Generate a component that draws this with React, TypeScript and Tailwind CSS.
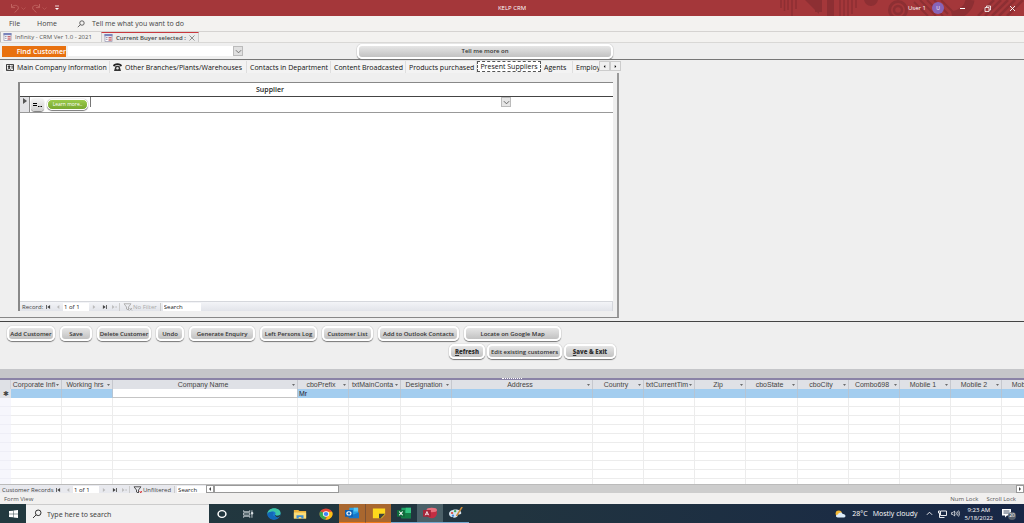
import { useState } from "react";
import type { ReactNode } from "react";

const UI = "font-['Open_Sans','Noto_Sans',sans-serif]";

function Chevron({ className = "" }: { className?: string }) {
  return (
    <svg viewBox="0 0 8 8" className={"size-[7px] " + className} fill="none" stroke="currentColor" aria-hidden="true">
      <path d="M1 2.500 4 5.500 7 2.500" />
    </svg>
  );
}

function UndoIcon({ flip = false }: { flip?: boolean }) {
  return (
    <svg viewBox="0 0 10 10" className={"size-2.5 " + (flip ? "-scale-x-100" : "")} fill="none" stroke="currentColor" strokeWidth="1" aria-hidden="true">
      <path d="M1.500 1v3.600h3.600M1.500 4.400C3.400 1.600 8.200 1.600 8.400 4.800 8.400 6.600 6.600 7.600 4.600 9.400" />
    </svg>
  );
}

function TitlePattern() {
  return (
    <svg viewBox="0 0 244 16" className="absolute inset-y-0 right-0 h-4 w-[244px]" fill="none" stroke="#8d2f33" aria-hidden="true">
      <path d="M1 0v8M4.500 0v11M8 0v10M12 0v16M16 0v9" strokeWidth="1.500" />
      <path d="M25 0l14 14V0z" fill="#8d2f33" stroke="none" />
      <path d="M35 0h7v12H35zM47 0h7v16H47z" fill="#8d2f33" stroke="none" />
      <path d="M60 0v16M64 0v16M68 0v16M72 0v14M76 0v8" strokeWidth="1.500" />
      <circle cx="91" cy="-1" r="7" fill="#8d2f33" stroke="none" />
      <circle cx="118" cy="10" r="8.500" strokeWidth="3" />
      <circle cx="118" cy="10" r="4" strokeWidth="2.500" />
      <path d="M134 2l14 14M140 0l16 16M147 0l16 16M154 0l14 14M161 0l12 12" strokeWidth="2" />
      <path d="M190 0c-1 8-8 14-18 16" strokeWidth="9" />
      <path d="M198 16l16-16M205 16l16-16M212 16l16-16M219 16l16-16M227 16l16-16" strokeWidth="2.500" />
    </svg>
  );
}

function TitleBar() {
  return (
    <header className="relative grid h-4 shrink-0 grid-cols-3 items-center overflow-hidden bg-[#a4373a] text-[6px] text-white">
      <TitlePattern />
      <div className="flex items-center gap-0.5 pl-2.5 text-[#c0625f]">
        <button aria-label="Undo" className="flex items-center"><UndoIcon /><Chevron className="scale-75" /></button>
        <button aria-label="Redo" className="ml-0.5 flex items-center"><UndoIcon flip /><Chevron className="scale-75" /></button>
        <button aria-label="Customize toolbar" className="ml-1 text-white">
          <svg viewBox="0 0 6 6" className="size-1.5" stroke="currentColor" fill="currentColor" strokeWidth=".8"><path d="M1 1h4" /><path d="M1 3h4L3 5z" stroke="none" /></svg>
        </button>
      </div>
      <h1 className="text-center">KELP CRM</h1>
      <div className="relative flex items-center justify-end">
        <span className="mr-1.5">User 1</span>
        <span className="mr-[15px] flex size-3 items-center justify-center rounded-full bg-[#8764b8] text-[5px]">U</span>
        <button aria-label="Minimize" className="mr-[18px]"><svg viewBox="0 0 7 7" className="size-[7px]" stroke="currentColor"><path d="M1 3.500h5" /></svg></button>
        <button aria-label="Restore" className="mr-[18px]"><svg viewBox="0 0 7 7" className="size-[7px]" fill="none" stroke="currentColor" strokeWidth=".8"><path d="M1 2.500h4v4H1zM2.500 2.500V1h4v4H5" /></svg></button>
        <button aria-label="Close" className="mr-2"><svg viewBox="0 0 7 7" className="size-[7px]" stroke="currentColor" strokeWidth=".9"><path d="M1 1l5 5M6 1L1 6" /></svg></button>
      </div>
    </header>
  );
}

function SearchGlyph({ className }: { className: string }) {
  return (
    <svg viewBox="0 0 10 10" className={className} fill="none" stroke="currentColor" aria-hidden="true">
      <circle cx="6.200" cy="3.800" r="2.800" /><path d="M4.200 5.800 1 9" />
    </svg>
  );
}

function FormIcon() {
  return (
    <svg viewBox="0 0 9 9" className="h-2 w-[9px] shrink-0" aria-hidden="true">
      <path d="M.5.5h8v8h-8z" fill="#fff" stroke="#a5a5bb" /><path d="M0 0h9v2.500H0z" fill="#7a84bb" />
      <path d="M1.500 4h2M1.500 6h2" stroke="#8c8ca8" /><path d="M4.500 3.500h3.500v1.500H4.500zM4.500 6h3.500v1.500H4.500z" fill="#c9696f" />
    </svg>
  );
}

function GlossButton({ children, className }: { children: ReactNode; className: string }) {
  return (
    <button className={"flex h-[15px] shrink-0 items-center justify-center rounded-[5px] border-2 border-white bg-linear-to-b from-[#e6e6e6] to-[#c2c2c2] text-[6px] font-semibold whitespace-nowrap text-[#333] shadow-[0_1px_1px_#777,0_0_1px_#999] " + className}>
      {children}
    </button>
  );
}

const pages = [
  { name: "Main Company Information", width: "w-[107px]", icon: "contact" },
  { name: "Other Branches/Plants/Warehouses", width: "w-[137px]", icon: "phone" },
  { name: "Contacts in Department", width: "w-[84px]" },
  { name: "Content Broadcasted", width: "w-[75px]" },
  { name: "Products purchased", width: "w-[71px]" },
  { name: "Present Suppliers", width: "w-16" },
  { name: "Agents", width: "w-8" },
  { name: "Employees", width: "w-10" },
];

function PageIcon({ kind }: { kind: string }) {
  return kind === "contact" ? (
    <svg viewBox="0 0 9 8" className="h-[7px] w-2 shrink-0" fill="none" stroke="#222" aria-hidden="true">
      <path d="M.5.5h8v7h-8z" /><circle cx="3.500" cy="3" r="1" fill="#222" /><path d="M2 6.500c0-2 3-2 3 0M6 2.500h2M6 4.500h2" />
    </svg>
  ) : (
    <svg viewBox="0 0 9 8" className="h-2 w-[9px] shrink-0" aria-hidden="true">
      <path d="M0 3C0-.6 9-.6 9 3L7 3.600 6.500 2.300h-4L2 3.600z" fill="#222" /><path d="M2.500 3h4l1.500 5H1z" fill="#333" /><circle cx="4.500" cy="5.300" r="1.200" fill="#ddd" />
    </svg>
  );
}

function PageTabs() {
  const [active, setActive] = useState("Present Suppliers");
  return (
    <div className="flex w-[621px] items-start pt-px pl-[3px]">
      <div role="tablist" className="flex min-w-0 flex-1 overflow-hidden">
        {pages.map((p) => (
          <button
            key={p.name}
            role="tab"
            aria-selected={p.name === active}
            onClick={() => setActive(p.name)}
            className={
              "flex shrink-0 items-center gap-[3px] text-[7px] font-medium whitespace-nowrap text-[#111] " + p.width +
              (p.name === active
                ? " h-[11px] justify-center border border-dashed border-[#555] bg-white"
                : " h-3 border-r border-[#dedede] bg-[#f3f3f3] pl-[3px]")
            }
          >
            {p.icon && <PageIcon kind={p.icon} />}
            {p.name}
          </button>
        ))}
      </div>
      <button aria-label="Scroll tabs left" className="flex h-2.5 w-[11px] items-center justify-center border border-[#ccc] bg-[#f0f0f0]"><svg viewBox="0 0 4 4" className="size-[3px]"><path d="M3 0v4L1 2z" /></svg></button>
      <button aria-label="Scroll tabs right" className="flex h-2.5 w-[11px] items-center justify-center border border-[#ccc] bg-[#f0f0f0]"><svg viewBox="0 0 4 4" className="size-[3px]"><path d="M1 0v4l2-2z" /></svg></button>
    </div>
  );
}

function NavArrow({ label, d, dim = false }: { label: string; d: string; dim?: boolean }) {
  return (
    <button aria-label={label} className={"flex w-[10px] shrink-0 justify-center " + (dim ? "text-[#bbb]" : "text-[#444]")}>
      <svg viewBox="0 0 6 5" className="h-1 w-[5px]" fill="currentColor"><path d={d} /></svg>
    </button>
  );
}

function RecordNav({ label, labelWidth, filter, filtered, searchWidth }: { label: string; labelWidth: string; filter: string; filtered: boolean; searchWidth: string }) {
  return (
    <div className="flex h-[9px] shrink-0 items-center text-[6px] text-[#444]">
      <span className={"shrink-0 whitespace-nowrap pl-[2px] " + labelWidth}>{label}</span>
      <NavArrow label="First record" d="M0 0h1v5H0zM5 0v5L1.500 2.500z" />
      <NavArrow label="Previous record" d="M4 0v5L1 2.500z" dim />
      <input aria-label={label + " position"} defaultValue="1 of 1" className="h-2 w-[26px] bg-white pl-px text-[6px] text-[#222] outline-none" />
      <NavArrow label="Next record" d="M1 0v5l3-2.500z" dim />
      <NavArrow label="Last record" d="M5 0h1v5H5zM1 0v5l3.500-2.500z" />
      <NavArrow label="New record" d="M0 0v5l3-2.500zM4 2h2v1H4z" dim />
      <button className={"flex h-2 items-center border-x border-[#ccc] px-[3px] whitespace-nowrap " + (filtered ? "text-[#444]" : "text-[#aaa]")}>
        <svg viewBox="0 0 10 8" className="h-2 w-2.5" fill="none" stroke="currentColor" strokeWidth=".9"><path d="M1 .8h7L5.500 4v3L3.500 6V4z" /><path d="M6.500 5l2.500 2.500M9 5 6.500 7.500" stroke={filtered ? "#d33" : "currentColor"} /></svg>
        {filter}
      </button>
      <input aria-label={"Search " + label} defaultValue="Search" className={"ml-[2px] h-2 bg-white pl-px text-[6px] text-[#222] outline-none " + searchWidth} />
    </div>
  );
}

function SupplierForm() {
  return (
    <section aria-label="Present Suppliers" className="mb-[3px] flex w-[619px] flex-1 flex-col border-r-2 border-b border-[#999] border-b-[#888] pt-[9px] pr-1 pb-[6px] pl-[18px]">
      <div className="flex flex-1 flex-col border-t border-l-2 border-[#888] bg-white">
        <div className="flex h-[14px] items-center border-b border-[#444] pl-[236px] text-[7px] font-semibold text-[#222]">Supplier</div>
        <div className="flex h-4 items-start border-b border-[#999]">
          <div className="flex h-full w-[10px] justify-center border-r border-[#888] bg-[#e3e3e6] pt-px">
            <svg viewBox="0 0 4 6" className="h-1.5 w-1"><path d="M0 0v6l4-3z" fill="#555" /></svg>
          </div>
          <button aria-label="Open supplier" className="mt-px ml-px flex h-[13px] w-[13px] items-center justify-center rounded bg-linear-to-b from-[#f6f6f6] to-[#cfcfcf] text-black shadow-[0_1px_1px_#777]">
            <svg viewBox="0 0 9 6" className="h-1.5 w-[9px]" stroke="currentColor"><path d="M0 1.500h4M0 3.500h4M5 4.500h1.500M7.500 4.500H9" /></svg>
          </button>
          <button className="mt-[2px] ml-[3px] flex h-[11px] w-[41px] items-center justify-center rounded-[5px] border border-white bg-linear-to-b from-[#9bcb4b] to-[#78a82f] text-[5px] text-white shadow-[0_1px_1px_#777,0_0_1px_#777]">Learn more..</button>
          <select aria-label="Supplier" className="ml-[2px] h-[10px] w-[411px] appearance-none border-l border-[#777] bg-white outline-none" />
          <span className="flex h-[10px] w-[10px] items-center justify-center border border-[#bbb] bg-[#e6e6e6] text-[#555]"><Chevron /></span>
        </div>
        <div className="flex-1" />
        <div className="border-t border-r border-[#d5d7dc] bg-linear-to-b from-[#f3f4f7] to-[#e2e4ea]">
          <RecordNav label="Record:" labelWidth="w-[23px]" filter="No Filter" filtered={false} searchWidth="w-[38px]" />
        </div>
      </div>
    </section>
  );
}

function CustomerForm() {
  return (
    <main className="flex flex-1 flex-col bg-[#efefef]">
      <div className="flex h-[17px] shrink-0 items-center border-b border-[#777] pl-[2px]">
        <label htmlFor="find" className="flex h-[11px] w-16 items-center justify-end bg-[#e8710f] text-[7px] font-semibold text-white">Find Customer</label>
        <select id="find" className="ml-[2px] h-[10px] w-[165px] appearance-none bg-white outline-none" />
        <span className="flex size-[10px] items-center justify-center border border-[#bbb] bg-[#e0e0e0] text-[#666]"><Chevron /></span>
        <GlossButton className="ml-[114px] h-3 w-[256px]">Tell me more on</GlossButton>
      </div>
      <PageTabs />
      <SupplierForm />
      <div className="shrink-0 border-t border-[#444] pt-1">
        <div className="flex gap-[5px] pl-[7px]">
          <GlossButton className="w-12">Add Customer</GlossButton>
          <GlossButton className="w-8">Save</GlossButton>
          <GlossButton className="w-[54px]">Delete Customer</GlossButton>
          <GlossButton className="w-7">Undo</GlossButton>
          <GlossButton className="w-[66px]">Generate Enquiry</GlossButton>
          <GlossButton className="w-[57px]">Left Persons Log</GlossButton>
          <GlossButton className="w-[51px]">Customer List</GlossButton>
          <GlossButton className="w-[81px]">Add to Outlook Contacts</GlossButton>
          <GlossButton className="w-[97px]">Locate on Google Map</GlossButton>
        </div>
        <div className="mt-[3px] mb-[10px] flex gap-[2px] pl-[449px]">
          <GlossButton className="w-9"><b><u>R</u>efresh</b></GlossButton>
          <GlossButton className="w-[75px]">Edit existing customers</GlossButton>
          <GlossButton className="w-[52px]"><b><u>S</u>ave &amp; Exit</b></GlossButton>
        </div>
      </div>
      <div className="h-[9px] shrink-0 bg-[#c5c6c9]" />
    </main>
  );
}

const columns = [
  ["Corporate Infi", 51], ["Working hrs", 51], ["Company Name", 185], ["cboPrefix", 51], ["txtMainConta", 52], ["Designation", 51],
  ["Address", 141], ["Country", 51], ["txtCurrentTim", 51], ["Zip", 51], ["cboState", 52], ["cboCity", 51], ["Combo698", 51],
  ["Mobile 1", 51], ["Mobile 2", 51], ["Mobile 3", 51],
] as const;

function Datasheet() {
  return (
    <section aria-label="Customer Records" className="shrink-0 bg-white font-['Liberation_Sans',sans-serif]">
      <div className="flex h-0.5 justify-center bg-[#8a83a6]"><span className="w-5 border-t border-dotted border-white" /></div>
      <div className="overflow-hidden">
        <table className="w-[1053px] table-fixed border-separate border-spacing-0 text-[7px] text-[#444]">
          <colgroup>
            <col className="w-[11px]" />
            {columns.map(([name, width]) => <col key={name} style={{ width }} />)}
          </colgroup>
          <thead>
            <tr className="h-[9px] bg-[#dfe1e6]">
              <th aria-label="Select all" className="border-r border-[#d0d2d8] p-0" />
              {columns.map(([name]) => (
                <th key={name} className="h-[9px] border-r border-[#c6c8ce] p-0 leading-[9px] font-normal">
                  <span className="flex items-center pr-[2px] pl-px">
                    <span className="min-w-0 flex-1 overflow-hidden whitespace-nowrap">{name}</span>
                    <svg viewBox="0 0 4 2" className="h-0.5 w-[3px] shrink-0" aria-hidden="true"><path d="M0 0h4L2 2z" fill="#444" /></svg>
                  </span>
                </th>
              ))}
            </tr>
          </thead>
          <tbody>
            <tr className="h-[9px] bg-[#a3cdef]">
              <td className="h-[9px] bg-[#dfe1e6] p-0 text-center leading-[9px]">✱</td>
              {columns.map(([name]) => (
                <td key={name} className={"h-[9px] border-r border-[#b5c4d3] p-0 pl-px leading-[9px] text-[#223] " + (name === "Company Name" ? "border-b border-b-[#c5c5c5] bg-white" : "")}>
                  {name === "cboPrefix" ? "Mr" : ""}
                </td>
              ))}
            </tr>
            {Array.from({ length: 9 }, (_, r) => (
              <tr key={r} className="h-[9px]">
                <td className="h-[9px] border-b border-[#eeeef6] bg-[#f6f6fc] p-0" />
                {columns.map(([name]) => <td key={name} className="h-[9px] border-r border-b border-[#ececec] p-0" />)}
              </tr>
            ))}
            <tr className="h-[5px]">
              <td className="h-[5px] bg-[#f6f6fc] p-0" />
              {columns.map(([name]) => <td key={name} className="h-[5px] border-r border-[#ececec] p-0" />)}
            </tr>
          </tbody>
        </table>
      </div>
      <div className={"flex h-[9px] items-stretch border-t border-[#bbb] bg-[#e8e9ee] " + UI}>
        <RecordNav label="Customer Records" labelWidth="w-[53px]" filter="Unfiltered" filtered searchWidth="w-[29px]" />
        <button aria-label="Scroll left" className="flex w-2 items-center justify-center border border-[#999] bg-white"><svg viewBox="0 0 4 4" className="size-1"><path d="M3 0v4L1 2z" fill="#444" /></svg></button>
        <div className="flex-1 bg-[#cdcdcd]"><div className="h-full w-[125px] border border-[#999] bg-white" /></div>
        <button aria-label="Scroll right" className="flex w-2 items-center justify-center border border-[#999] bg-white"><svg viewBox="0 0 4 4" className="size-1"><path d="M1 0v4l2-2z" fill="#444" /></svg></button>
      </div>
    </section>
  );
}

const apps: { name: string; className: string; art: ReactNode }[] = [
  { name: "Cortana", className: "", art: <circle cx="8" cy="8" r="4.500" fill="none" stroke="#fff" strokeWidth="1.700" /> },
  { name: "Task View", className: "", art: <g fill="none" stroke="#dde3e6"><path d="M3 3v2h7V3M3 13v-2h7v2M3 6.500h7v3H3zM12.500 3v10" /><path d="M12 6h1.500v2H12z" fill="#fff" /></g> },
  { name: "Edge", className: "", art: <g><circle cx="8" cy="8" r="7.500" fill="#1b78cf" /><path d="M.5 8C.5-2 15.500-2 15.500 7c0 4-5.500 4-6.500 2 2-2 0-5-3-4.500C3 5 1.500 6.500.5 8z" fill="#3cc5a5" /><path d="M.5 8c1-4 6.500-4 7.500-1-3 1-1 6 5 5.500C8 18 .5 14 .5 8z" fill="#1267b8" /><path d="M9 8.500c1 2 4 2.500 6.500 0 0 2-1.500 3.500-3 4C10 12 8.500 10 9 8.500z" fill="#22383f" /></g> },
  { name: "File Explorer", className: "", art: <g><path d="M1 2.500h5L7.500 4H15v10H1z" fill="#eeb33c" /><path d="M1 6h14v8H1z" fill="#fbdc78" /><path d="M4 14V9.500h8V14H9.500v-2h-3v2z" fill="#3f8fd5" /></g> },
  { name: "Chrome", className: "", art: <g><circle cx="8" cy="8" r="7.500" fill="#e4473a" /><path d="M8 8 1.600 4.200A7.500 7.500 0 0 0 7.500 15.500z" fill="#35a853" /><path d="M8 5h6.900A7.500 7.500 0 0 1 7.300 15.500L11 9z" fill="#fbc116" /><circle cx="8" cy="8" r="3.600" fill="#fff" /><circle cx="8" cy="8" r="2.700" fill="#4285f4" /></g> },
  { name: "Outlook", className: "bg-[#a9672f] border-b border-[#f07a1c]", art: <g><path d="M5 1h10v10H5z" fill="#28a0e4" /><path d="M10 1h5v5h-5z" fill="#58c7f5" /><path d="M4 7l6 3 6-3v8H4z" fill="#1776c9" /><path d="M0 4h9v9H0z" fill="#0c61b5" /><circle cx="4.500" cy="8.500" r="2.300" fill="none" stroke="#fff" strokeWidth="1.400" /></g> },
  { name: "Sticky Notes", className: "bg-[#a9672f] border-b border-[#f07a1c] border-l border-l-[#7d5133]", art: <g><path d="M1 2h14v8l-4 5H1z" fill="#ffd91c" /><path d="M8 9h7l-5 6H8z" fill="#41443d" /></g> },
  { name: "Excel", className: "border-b border-[#76a9d0]", art: <g><path d="M5 1h11v14H5z" fill="#21a366" /><path d="M10 1h6v7h-6z" fill="#33c481" /><path d="M5 8h11v7H5z" fill="#137c45" /><path d="M0 4h9v9H0z" fill="#0f6b3b" /><path d="M2.500 6l4 5M6.500 6l-4 5" stroke="#fff" strokeWidth="1.300" /></g> },
  { name: "Access", className: "bg-[#4b6068] border-b border-[#76a9d0]", art: <g><ellipse cx="10" cy="8" rx="6" ry="7" fill="#c42d42" /><ellipse cx="10" cy="4" rx="6" ry="3" fill="#e8707d" /><path d="M0 4h9v9H0z" fill="#a5253a" /><path d="M2.500 11 4.500 6l2 5M3.200 9.500h2.600" stroke="#fff" fill="none" /></g> },
  { name: "Paint", className: "border-b border-[#76a9d0]", art: <g><path d="M0 9C0 2 14 1 14 8c0 3-4 1-4 3 0 5-10 4-10-2z" fill="#d5e5ef" /><circle cx="3.500" cy="8" r="1.400" fill="#d9483b" /><circle cx="7" cy="5.500" r="1.400" fill="#3fa659" /><circle cx="4.500" cy="11.500" r="1.400" fill="#4187d5" /><path d="M15 0 8.500 12" stroke="#d18c3b" strokeWidth="1.800" /></g> },
];

function Taskbar() {
  return (
    <footer className="flex h-[19px] shrink-0 items-stretch bg-linear-to-r from-[#22393f] via-[#21343f] to-[#182746] text-[7px] text-white">
      <button aria-label="Start" className="flex w-[26px] items-center justify-center">
        <svg viewBox="0 0 10 10" className="h-2 w-[9px]" fill="#fff" preserveAspectRatio="none"><path d="M0 1.400 4.500.8v3.900H0zM5 .7 10 0v4.700H5zM0 5.200h4.500v4L0 8.600zM5 5.200h5V10l-5-.7z" /></svg>
      </button>
      <label className="flex w-[183px] items-center gap-[5px] border-t border-[#ccc] bg-[#f1f1f1] pl-[6px] text-[#333]">
        <SearchGlyph className="size-[10px]" />
        <input aria-label="Type here to search" placeholder="Type here to search" className="min-w-0 flex-1 bg-transparent font-['Noto_Sans',sans-serif] text-[7px] outline-none placeholder:text-[#444]" />
      </label>
      {apps.map((a) => (
        <button key={a.name} aria-label={a.name} className={"flex w-[26px] items-center justify-center " + a.className}>
          <svg viewBox="0 0 16 16" className="h-3 w-[14px]" preserveAspectRatio="none">{a.art}</svg>
        </button>
      ))}
      <div className="flex flex-1 items-center justify-end">
        <svg viewBox="0 0 12 9" className="mr-[6px] h-2 w-[11px]"><circle cx="4" cy="4" r="3.500" fill="#f5b832" /><path d="M3 8.500C0 8.500.5 5 3 5c1-3 5-3 5.500-.5C12 4 12.500 8.500 10 8.500z" fill="#dcebf8" /></svg>
        <span className="mr-[5px]">28°C</span>
        <span className="mr-2">Mostly cloudy</span>
        <Chevron className="mr-[5px] rotate-180" />
        <svg viewBox="0 0 9 8" className="mr-1 h-2 w-[9px]" fill="none" stroke="#fff" strokeWidth=".9"><path d="M3 1h5.500v4.500H2.500V3M.5 1h2v2h-2zM1.500 3v4.500h5" /></svg>
        <svg viewBox="0 0 10 8" className="mr-[5px] h-[7px] w-[9px]" fill="none" stroke="#fff" strokeWidth=".8"><path d="M.5 3h1.500l2-2v6L2 5H.5zM5.500 2.500q1.200 1.500 0 3M7 1.500q2 2.500 0 5M8.500.5q2.600 3.500 0 7" /></svg>
        <span className="mr-[9px] text-center text-[6px] leading-2">9:23 AM<br />5/18/2022</span>
        <span className="relative mr-2 h-3 w-[14px]">
          <svg viewBox="0 0 10 10" className="size-2.5"><path d="M0 1h9v6.500H5L3 9.500v-2H0z" fill="#fff" /><path d="M1.500 3h6M1.500 5h6" stroke="#1b2a45" strokeWidth=".8" /></svg>
          <span className="absolute right-0 bottom-0 flex size-2 items-center justify-center rounded-full bg-[#59616c] text-[5px]">20</span>
        </span>
      </div>
    </footer>
  );
}

export default function App() {
  return (
    <div className={"flex min-h-screen flex-col overflow-hidden leading-none " + UI}>
      <TitleBar />
      <nav aria-label="Ribbon" className="flex h-4 shrink-0 items-center border-b border-[#d5d3d1] bg-[#f3f2f0] pl-[9px] text-[7px] text-[#444]">
        <button className="mr-[17px]">File</button>
        <button className="mr-5">Home</button>
        <button className="flex items-center gap-[7px]"><SearchGlyph className="size-2" />Tell me what you want to do</button>
      </nav>
      <nav aria-label="Open forms" className="flex h-[11px] shrink-0 items-stretch border-b border-[#d9d8d6] bg-[#f3f2f0] text-[6px] text-[#555]">
        <button className="flex w-[101px] items-center gap-[3px] border-l border-[#bbb] pl-[2px] whitespace-nowrap"><FormIcon />Infinity - CRM Ver 1.0 - 2021</button>
        <div className="flex w-[98px] items-center gap-[3px] border-x border-t border-[#ccc] border-t-[#c8383e] bg-[#ebebeb] pl-[2px] font-semibold whitespace-nowrap text-[#444]">
          <FormIcon />
          <span className="flex-1">Current Buyer selected :</span>
          <button aria-label="Close form" className="mr-1"><svg viewBox="0 0 6 6" className="size-1.5" stroke="#777" strokeWidth=".8"><path d="M.5.5l5 5M5.500.5l-5 5" /></svg></button>
        </div>
      </nav>
      <CustomerForm />
      <Datasheet />
      <div className="flex h-[11px] shrink-0 items-center justify-end gap-2 bg-[#f1f0ef] pr-2 pl-1 text-[6px] text-[#555]">
        <span className="mr-auto">Form View</span>
        <span>Num Lock</span>
        <span>Scroll Lock</span>
      </div>
      <Taskbar />
    </div>
  );
}
